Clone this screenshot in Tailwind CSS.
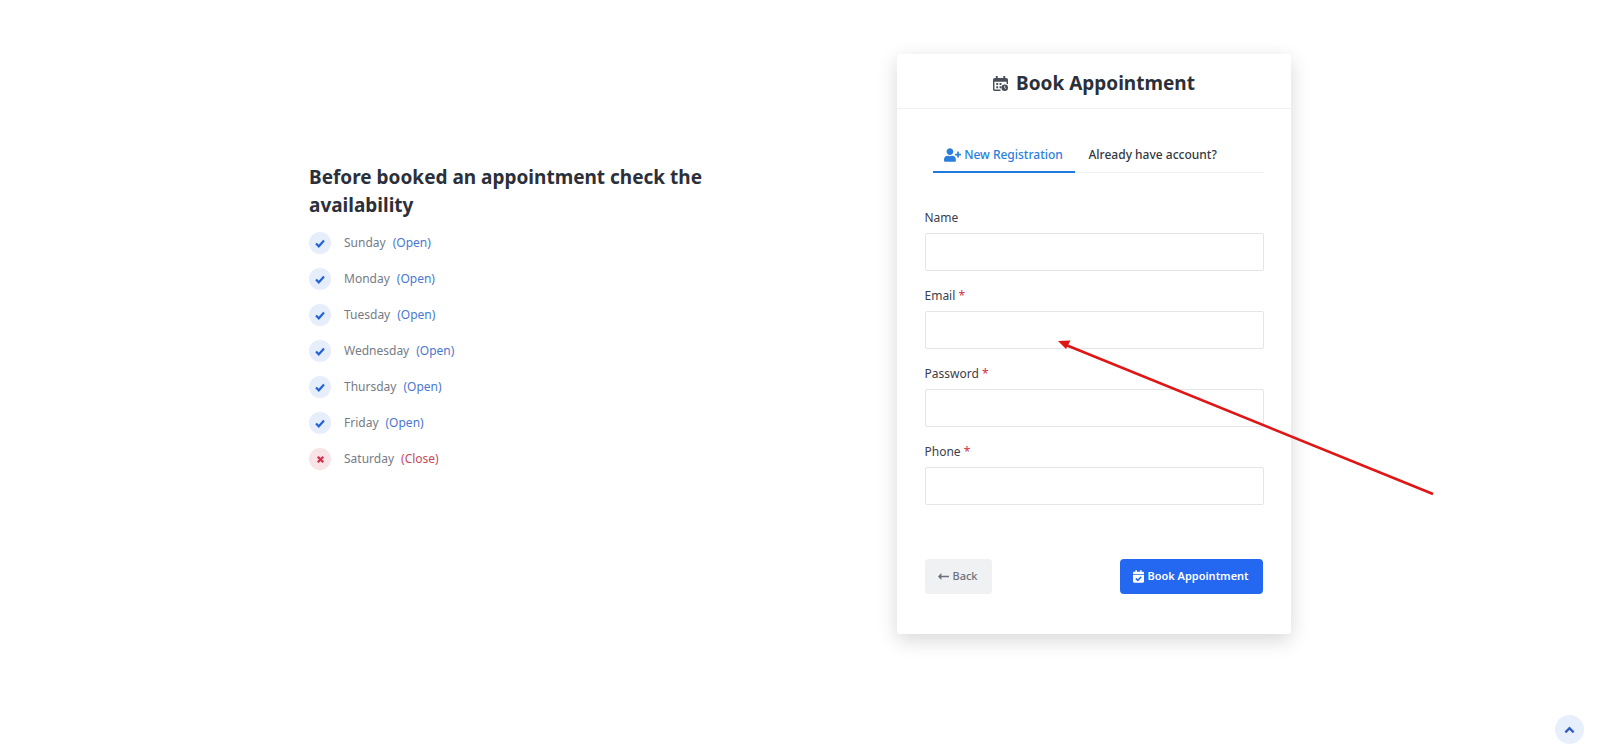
<!DOCTYPE html>
<html lang="en">

<head>
    <meta charset="UTF-8">
    <meta name="viewport" content="width=device-width, initial-scale=1.0">
    <title>Book Appointment</title>
    <script src="https://cdn.jsdelivr.net/npm/@tailwindcss/browser@4"></script>
</head>

<body class="bg-white font-['Noto_Sans','Open_Sans',sans-serif] overflow-hidden">

    <div class="relative h-[747px] w-[1600px] flex pl-[309px] pt-[54px]">

        <!-- availability -->
        <div class="w-[588px] pt-[109px]">
            <h2 class="w-[410px] text-[19px] leading-[28px] font-bold text-[#2b303a]">Before booked an appointment check the availability</h2>
            <ul class="mt-[13px] flex flex-col gap-[14px] text-[12px] leading-[22px] text-[#767b85]">
                <li class="flex items-center">
                    <span class="w-[22px] h-[22px] rounded-full bg-[#e6eefc] flex items-center justify-center mr-[13px]">
                        <svg class="w-[12px] h-[12px] text-[#2563d8]" viewBox="0 0 12 12" fill="none" stroke="currentColor" stroke-width="2.2"><path d="M2 6.500l2.800 2.800L10 3.500"/></svg>
                    </span>
                    <span>Sunday</span><span class="ml-[7px] text-[#4a78cf]">(Open)</span>
                </li>
                <li class="flex items-center">
                    <span class="w-[22px] h-[22px] rounded-full bg-[#e6eefc] flex items-center justify-center mr-[13px]">
                        <svg class="w-[12px] h-[12px] text-[#2563d8]" viewBox="0 0 12 12" fill="none" stroke="currentColor" stroke-width="2.2"><path d="M2 6.500l2.800 2.800L10 3.500"/></svg>
                    </span>
                    <span>Monday</span><span class="ml-[7px] text-[#4a78cf]">(Open)</span>
                </li>
                <li class="flex items-center">
                    <span class="w-[22px] h-[22px] rounded-full bg-[#e6eefc] flex items-center justify-center mr-[13px]">
                        <svg class="w-[12px] h-[12px] text-[#2563d8]" viewBox="0 0 12 12" fill="none" stroke="currentColor" stroke-width="2.2"><path d="M2 6.500l2.800 2.800L10 3.500"/></svg>
                    </span>
                    <span>Tuesday</span><span class="ml-[7px] text-[#4a78cf]">(Open)</span>
                </li>
                <li class="flex items-center">
                    <span class="w-[22px] h-[22px] rounded-full bg-[#e6eefc] flex items-center justify-center mr-[13px]">
                        <svg class="w-[12px] h-[12px] text-[#2563d8]" viewBox="0 0 12 12" fill="none" stroke="currentColor" stroke-width="2.2"><path d="M2 6.500l2.800 2.800L10 3.500"/></svg>
                    </span>
                    <span>Wednesday</span><span class="ml-[7px] text-[#4a78cf]">(Open)</span>
                </li>
                <li class="flex items-center">
                    <span class="w-[22px] h-[22px] rounded-full bg-[#e6eefc] flex items-center justify-center mr-[13px]">
                        <svg class="w-[12px] h-[12px] text-[#2563d8]" viewBox="0 0 12 12" fill="none" stroke="currentColor" stroke-width="2.2"><path d="M2 6.500l2.800 2.800L10 3.500"/></svg>
                    </span>
                    <span>Thursday</span><span class="ml-[7px] text-[#4a78cf]">(Open)</span>
                </li>
                <li class="flex items-center">
                    <span class="w-[22px] h-[22px] rounded-full bg-[#e6eefc] flex items-center justify-center mr-[13px]">
                        <svg class="w-[12px] h-[12px] text-[#2563d8]" viewBox="0 0 12 12" fill="none" stroke="currentColor" stroke-width="2.2"><path d="M2 6.500l2.800 2.800L10 3.500"/></svg>
                    </span>
                    <span>Friday</span><span class="ml-[7px] text-[#4a78cf]">(Open)</span>
                </li>
                <li class="flex items-center">
                    <span class="w-[22px] h-[22px] rounded-full bg-[#f8e3e6] flex items-center justify-center mr-[13px]">
                        <svg class="w-[11px] h-[11px] text-[#d42f48]" viewBox="0 0 12 12" fill="none" stroke="currentColor" stroke-width="2.4"><path d="M3 3l6 6M9 3l-6 6"/></svg>
                    </span>
                    <span>Saturday</span><span class="ml-[7px] text-[#c9495d]">(Close)</span>
                </li>
            </ul>
        </div>

        <!-- booking card -->
        <div class="w-[394px] h-[580px] bg-white rounded-[3px] shadow-[0_6px_20px_rgba(0,0,0,0.16)]">
            <div class="h-[55px] border-b border-[#eef0f3] flex items-center justify-center gap-[8px]">
                <svg class="w-[15px] h-[15px] mt-[5px] text-[#4a4e58]" viewBox="0 0 16 16">
                    <path fill="currentColor" d="M3 0h2v2h6V0h2v2h1a2 2 0 0 1 2 2v4.500h-1.500V6h-13v7.500a1 1 0 0 0 1 1H8V16H2a2 2 0 0 1-2-2V4a2 2 0 0 1 2-2h1z"/>
                    <path fill="currentColor" d="M3.500 7.500h2v2h-2zM7 7.500h2v2H7zM3.500 11h2v2h-2zM7 11h2v2H7z"/>
                    <circle cx="12.500" cy="12.500" r="3.500" fill="currentColor"/>
                    <path d="M12.500 10.500v2.200l1.300.8" stroke="#fff" stroke-width="0.8" fill="none"/>
                </svg>
                <h1 class="mt-[3px] text-[19px] leading-[28px] font-bold text-[#2b303a]">Book Appointment</h1>
            </div>

            <div class="px-[27.500px]">
                <div class="mt-[28px] ml-[8px] flex border-b border-[#f1f2f4] h-[36px] text-[12px] font-medium">
                    <div class="w-[142px] -mb-[1px] h-[36px] border-b-2 border-[#1f7ae0] text-[#2a7fdc] flex items-center justify-center gap-[3px] pt-[2px]">
                        <svg class="w-[17px] h-[14px]" viewBox="0 0 640 512" fill="currentColor"><path d="M624 208h-64v-64c0-8.800-7.200-16-16-16h-32c-8.800 0-16 7.200-16 16v64h-64c-8.800 0-16 7.200-16 16v32c0 8.800 7.200 16 16 16h64v64c0 8.800 7.200 16 16 16h32c8.800 0 16-7.200 16-16v-64h64c8.800 0 16-7.200 16-16v-32c0-8.800-7.200-16-16-16zm-400 48c70.700 0 128-57.300 128-128S294.700 0 224 0 96 57.300 96 128s57.300 128 128 128zm89.600 32h-16.700c-22.200 10.200-46.900 16-72.900 16s-50.600-5.800-72.900-16h-16.700C60.200 288 0 348.200 0 422.400V464c0 26.500 21.500 48 48 48h352c26.500 0 48-21.500 48-48v-41.600c0-74.200-60.200-134.400-134.400-134.400z"/></svg>
                        <span>New Registration</span>
                    </div>
                    <div class="pl-[14px] flex items-center text-[#33373f] pt-[1px]">Already have account?</div>
                </div>

                <form class="mt-[33px] flex flex-col gap-[13px] text-[12px] text-[#3c404a]">
                    <div>
                        <label class="block h-[24px] leading-[23px] mb-[3px]">Name</label>
                        <input type="text" class="block w-full h-[38px] border border-[#e4e5e8] rounded-[2px] bg-white">
                    </div>
                    <div>
                        <label class="block h-[24px] leading-[23px] mb-[3px]">Email <span class="text-[#d42f48]">*</span></label>
                        <input type="email" class="block w-full h-[38px] border border-[#e4e5e8] rounded-[2px] bg-white">
                    </div>
                    <div>
                        <label class="block h-[24px] leading-[23px] mb-[3px]">Password <span class="text-[#d42f48]">*</span></label>
                        <input type="password" class="block w-full h-[38px] border border-[#e4e5e8] rounded-[2px] bg-white">
                    </div>
                    <div>
                        <label class="block h-[24px] leading-[23px] mb-[3px]">Phone <span class="text-[#d42f48]">*</span></label>
                        <input type="tel" class="block w-full h-[38px] border border-[#e4e5e8] rounded-[2px] bg-white">
                    </div>
                    <div class="mt-[41px] flex justify-between">
                        <button type="button" class="w-[67px] h-[35px] rounded-[4px] bg-[#eff1f3] text-[#6c717c] text-[11px] font-medium flex items-center justify-center gap-[3px]">
                            <svg class="w-[11px] h-[7px]" viewBox="0 0 13 8" fill="currentColor"><path d="M4 0v3h9v2H4v3L0 4z"/></svg>
                            Back
                        </button>
                        <button type="button" class="w-[143px] h-[35px] mr-[1px] rounded-[4px] bg-[#2468f2] text-white text-[11px] font-semibold flex items-center justify-center gap-[3px]">
                            <svg class="w-[11px] h-[13px]" viewBox="0 0 448 512" fill="currentColor"><path d="M436 160H12c-6.600 0-12-5.400-12-12v-36c0-26.500 21.500-48 48-48h48V12c0-6.600 5.400-12 12-12h40c6.600 0 12 5.400 12 12v52h128V12c0-6.600 5.400-12 12-12h40c6.600 0 12 5.400 12 12v52h48c26.500 0 48 21.500 48 48v36c0 6.600-5.400 12-12 12zM12 192h424c6.600 0 12 5.400 12 12v260c0 26.500-21.500 48-48 48H48c-26.500 0-48-21.500-48-48V204c0-6.600 5.400-12 12-12zm333.300 95.900l-28.200-28.400c-4.700-4.700-12.300-4.700-17-.1L194 365.300l-45.900-46.300c-4.700-4.700-12.300-4.700-17-.1l-28.400 28.200c-4.700 4.700-4.700 12.300-.1 17l82.600 83.300c4.700 4.700 12.300 4.700 17 .1l143-141.900c4.700-4.700 4.700-12.300.1-17z"/></svg>
                            Book Appointment
                        </button>
                    </div>
                </form>
            </div>
        </div>

        <!-- annotation arrow drawn over the page -->
        <svg class="absolute left-0 top-0 pointer-events-none" width="1600" height="747" viewBox="0 0 1600 747" fill="none">
            <path d="M1433 494L1066 345" stroke="#df1616" stroke-width="2.500"/>
            <path d="M1058 341l12.500-.5-4.500 8.500z" fill="#df1616"/>
        </svg>

        <!-- back to top -->
        <a href="#" class="absolute left-[1555px] top-[715px] w-[29px] h-[29px] rounded-full bg-[#e8effc] flex items-center justify-center">
            <svg class="w-[11px] h-[8px] text-[#2f5fc4]" viewBox="0 0 12 8" fill="none" stroke="currentColor" stroke-width="2.600"><path d="M1.500 6.500L6 2l4.500 4.500"/></svg>
        </a>
    </div>

</body>

</html>
